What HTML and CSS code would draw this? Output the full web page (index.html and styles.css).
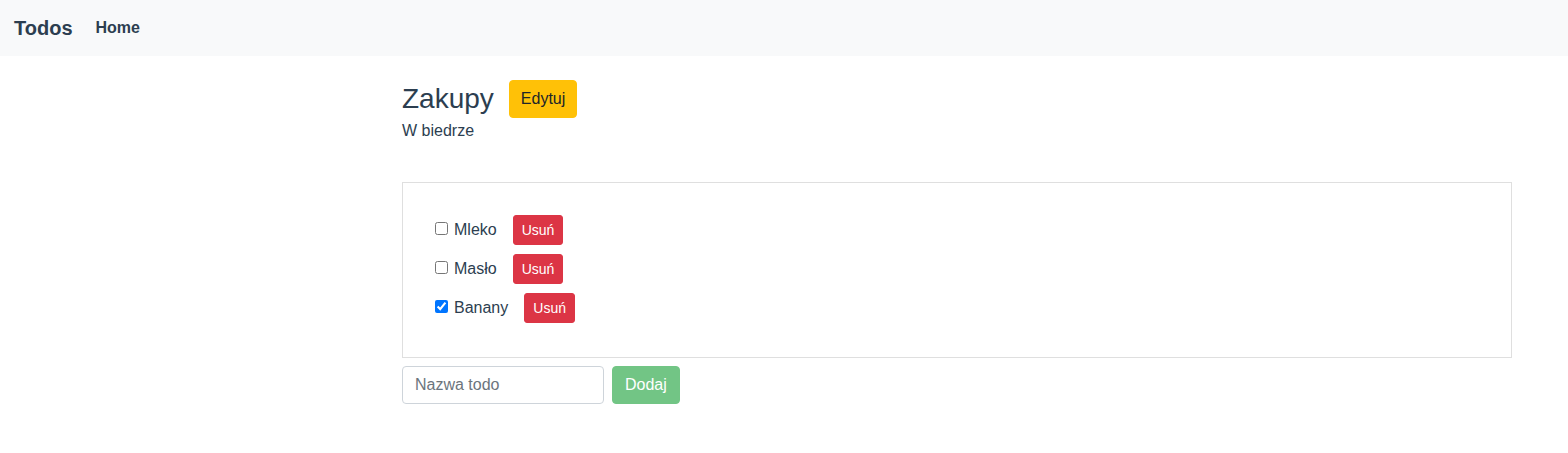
FILE: index.html
```html
<!DOCTYPE html>
<html lang="pl">
<head>
<meta charset="utf-8">
<title>Todos</title>
<link rel="stylesheet" href="styles.css">
</head>
<body>
<nav class="navbar">
  <a class="brand" href="#">Todos</a>
  <a class="nav-link" href="#">Home</a>
</nav>
<main class="main">
  <div class="title-row">
    <h3 class="title">Zakupy</h3>
    <button class="btn btn-warning">Edytuj</button>
  </div>
  <p class="desc">W biedrze</p>
  <div class="card">
    <ul class="todo-list">
      <li class="todo"><label class="todo-label"><input type="checkbox"> Mleko</label><button class="btn btn-sm btn-danger">Usuń</button></li>
      <li class="todo"><label class="todo-label"><input type="checkbox"> Masło</label><button class="btn btn-sm btn-danger">Usuń</button></li>
      <li class="todo"><label class="todo-label"><input type="checkbox" checked> Banany</label><button class="btn btn-sm btn-danger">Usuń</button></li>
    </ul>
  </div>
  <form class="add-form">
    <input class="input" type="text" placeholder="Nazwa todo">
    <button class="btn btn-success" type="button" disabled>Dodaj</button>
  </form>
</main>
</body>
</html>
```

FILE: styles.css
```css
* { box-sizing: border-box; }
body {
  margin: 0;
  font-family: "Liberation Sans", Arial, Helvetica, sans-serif;
  font-size: 16px;
  line-height: 1.5;
  color: #2c3e50;
  background: #fff;
}
.navbar {
  height: 56px;
  background: #f8f9fa;
  display: flex;
  align-items: center;
  padding: 0 14px;
}
.brand {
  font-size: 20px;
  font-weight: bold;
  color: #2c3e50;
  text-decoration: none;
  margin-right: 15px;
}
.nav-link {
  font-weight: bold;
  color: #2c3e50;
  text-decoration: none;
  padding: 0 8px;
  font-size: 16px;
}
.main {
  margin-left: 402px;
  width: 1110px;
  padding-top: 24px;
}
.title-row {
  display: flex;
  align-items: center;
  gap: 15px;
}
.title {
  margin: 0;
  font-size: 28px;
  font-weight: 500;
  line-height: 1.2;
}
.desc {
  margin: 0;
  padding-top: 1px;
}
.btn {
  font-family: inherit;
  font-size: 16px;
  line-height: 1.5;
  padding: 6px 11px;
  border: 1px solid transparent;
  border-radius: 4px;
  cursor: pointer;
}
.btn-sm {
  font-size: 14px;
  padding: 4px 8px;
  line-height: 20px;
  height: 30px;
  border-radius: 3px;
}
.btn-warning { background: #ffc107; border-color: #ffc107; color: #212529; }
.btn-danger { background: #dc3545; border-color: #dc3545; color: #fff; }
.btn-success { background: #28a745; border-color: #28a745; color: #fff; opacity: .65; cursor: default; padding: 6px 12px; }
.card {
  margin-top: 39px;
  border: 1px solid #dfdfdf;
  padding: 32px 32px 34px;
}
.todo-list {
  list-style: none;
  margin: 0;
  padding: 0;
  display: flex;
  flex-direction: column;
  gap: 9px;
}
.todo {
  display: flex;
  align-items: center;
  gap: 16px;
}
.todo-label {
  display: flex;
  align-items: center;
  gap: 3px;
}
.todo-label input {
  margin: 0 3px 3px 0;
  width: 13px;
  height: 13px;
}
.add-form {
  display: flex;
  gap: 8px;
  margin-top: 8px;
}
.input {
  width: 202px;
  height: 38px;
  padding: 6px 12px;
  font-family: inherit;
  font-size: 16px;
  color: #495057;
  border: 1px solid #ced4da;
  border-radius: 4px;
}
.input::placeholder { color: #6c757d; }
.add-form .btn { height: 38px; }
```
